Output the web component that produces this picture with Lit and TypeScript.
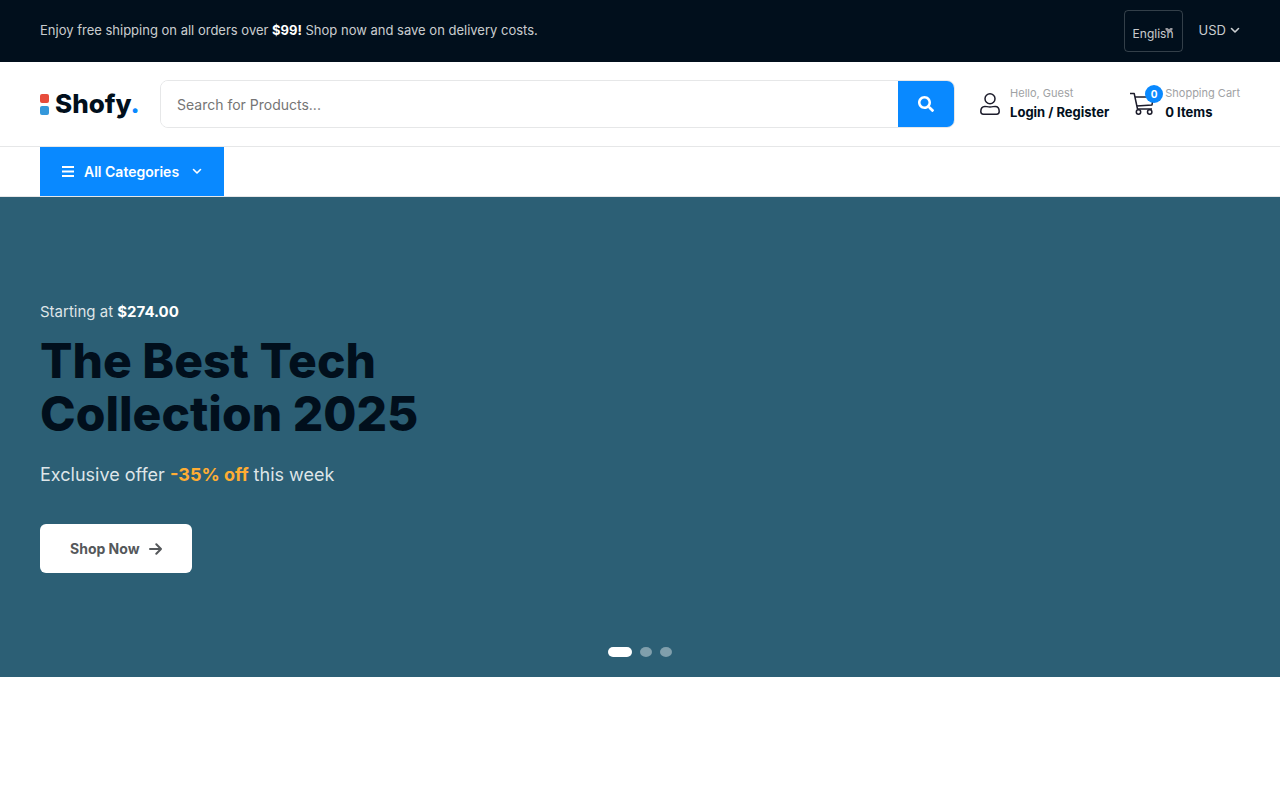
import { LitElement, html, css, svg } from "lit";
import { customElement, state } from "lit/decorators.js";

const chevron = svg`<path d="M1.500 1.500 5 5 8.500 1.500" fill="none" stroke="currentColor" stroke-width="1.600" stroke-linecap="round" stroke-linejoin="round"></path>`;

@customElement("app-root")
export class AppRoot extends LitElement {
  @state() private slide = 0;

  static styles = css`
    :host {
      display: block;
      font-family: Inter, "Liberation Sans", sans-serif;
      font-size: 14px;
      color: #010f1c;
      background: #fff;
    }
    * { box-sizing: border-box; }
    svg { display: block; flex: none; }
    a { color: inherit; text-decoration: none; }
    button, input, select { font: inherit; margin: 0; }
    button { cursor: pointer; border: 0; padding: 0; background: none; color: inherit; }
    .wrap { padding: 0 40px; }
    .topbar {
      display: flex;
      align-items: center;
      justify-content: space-between;
      background: #010f1c;
      color: rgba(255, 255, 255, 0.8);
      font-size: 13px;
      line-height: 20px;
      padding-top: 10px;
      padding-bottom: 10px;
    }
    .topbar p { margin: 0; padding-bottom: 2px; }
    .topbar strong { color: #fff; font-weight: 700; }
    .prefs { display: flex; align-items: center; gap: 16px; }
    .lang { display: grid; align-items: center; }
    .lang select, .lang svg { grid-area: 1 / 1; }
    .lang select {
      appearance: none;
      width: 59px;
      height: 42px;
      padding: 6px 0 0 8px;
      border: 1px solid rgba(255, 255, 255, 0.2);
      border-radius: 4px;
      background: transparent;
      color: inherit;
      font-size: 12px;
    }
    .lang svg { justify-self: end; margin-right: 10px; pointer-events: none; color: #9a9a9f; }
    .currency { display: flex; align-items: center; gap: 4px; padding-bottom: 2px; }
    .header { display: flex; align-items: center; min-height: 84px; }
    .logo { display: flex; align-items: center; gap: 6px; width: 120px; font-size: 26px; line-height: 34px; font-weight: 800; }
    .marks { display: grid; gap: 3px; }
    .marks i { width: 9px; height: 9px; border-radius: 2px; background: #e74c3c; }
    .marks i + i { background: #3498db; }
    .logo b { color: #0989ff; font-weight: 800; }
    .search {
      display: flex;
      flex: 1;
      height: 48px;
      border: 1px solid #e6e7e8;
      border-radius: 8px;
      overflow: hidden;
    }
    .search input { flex: 1; min-width: 0; border: 0; outline: 0; padding: 0 16px; font-size: 14px; color: inherit; background: #fff; }
    .search input::placeholder { color: #757575; opacity: 1; }
    .search button { display: grid; place-items: center; width: 56px; background: #0989ff; color: #fff; }
    .actions { display: flex; gap: 21px; margin-left: 25px; }
    .action { display: flex; align-items: center; gap: 10px; font-size: 13px; line-height: 20px; font-weight: 700; }
    .label { padding-bottom: 2px; }
    .action small { display: block; font-size: 11px; line-height: 18px; font-weight: 400; color: #a0a2a4; }
    .cart { position: relative; }
    .badge {
      position: absolute;
      top: -7px;
      right: -8px;
      width: 18px;
      height: 18px;
      border-radius: 50%;
      background: #0989ff;
      color: #fff;
      font-size: 10px;
      line-height: 18px;
      text-align: center;
    }
    .nav { border-top: 1px solid #e6e7e8; border-bottom: 1px solid #e6e7e8; }
    .categories {
      display: flex;
      align-items: center;
      width: 184px;
      height: 49px;
      padding: 0 22px;
      background: #0989ff;
      color: #fff;
      font-weight: 600;
    }
    .categories span { margin: 0 auto 0 10px; }
    .hero { display: flex; flex-direction: column; background: #2c5f75; min-height: 480px; padding-top: 102px; padding-bottom: 20px; }
    .hero p { margin: 0; color: rgba(255, 255, 255, 0.85); }
    .hero .from { font-size: 15px; line-height: 26px; }
    .from strong { color: #fff; font-weight: 700; }
    h1 { margin: 9px 0 20px; max-width: 500px; font-size: 48px; line-height: 53px; font-weight: 800; }
    .hero .offer { font-size: 18px; line-height: 30px; }
    .offer strong { color: #ffad33; font-weight: 700; }
    .shop {
      display: flex;
      align-items: center;
      align-self: flex-start;
      gap: 9px;
      height: 49px;
      margin-top: 34px;
      padding: 0 30px;
      border-radius: 6px;
      background: #fff;
      color: #55585b;
      font-weight: 700;
    }
    .dots { display: flex; justify-content: center; gap: 8px; margin-top: auto; }
    .dots button { width: 12px; height: 10px; border-radius: 50%; background: rgba(255, 255, 255, 0.4); }
    .dots button.on { width: 24px; border-radius: 5px; background: #fff; }
  `;

  render() {
    return html`
      <div class="topbar wrap">
        <p>Enjoy free shipping on all orders over <strong>$99!</strong> Shop now and save on delivery costs.</p>
        <div class="prefs">
          <div class="lang">
            <select aria-label="Language"><option>English</option></select>
            <svg width="8" height="6" viewBox="0 0 8 6"><path d="M.5 0h2L4 1.200 5.500 0h2v1.800L4 5.500.5 1.800z" fill="currentColor"></path></svg>
          </div>
          <button class="currency">USD <svg width="10" height="7" viewBox="0 0 10 7">${chevron}</svg></button>
        </div>
      </div>
      <header class="header wrap">
        <a class="logo" href="#">
          <span class="marks"><i></i><i></i></span><span>Shofy<b>.</b></span>
        </a>
        <form class="search" role="search" @submit=${(e: Event) => e.preventDefault()}>
          <input type="text" aria-label="Search for products" placeholder="Search for Products..." />
          <button aria-label="Search">
            <svg width="16" height="16" viewBox="0 0 512 512" fill="currentColor"><path d="M505 442.700 405.300 343c-4.500-4.500-10.600-7-17-7H372c27.600-35.300 44-79.700 44-128C416 93.100 322.900 0 208 0S0 93.100 0 208s93.100 208 208 208c48.300 0 92.700-16.400 128-44v16.300c0 6.400 2.500 12.500 7 17l99.700 99.700c9.400 9.400 24.600 9.400 33.900 0l28.300-28.300c9.400-9.400 9.400-24.600.1-34zM208 336c-70.700 0-128-57.200-128-128 0-70.700 57.200-128 128-128 70.700 0 128 57.200 128 128 0 70.700-57.200 128-128 128z"></path></svg>
          </button>
        </form>
        <div class="actions">
          <a class="action" href="#">
            <svg width="20" height="22" viewBox="0 0 20 22" fill="none" stroke="#1c1c2b" stroke-width="1.500"><circle cx="10" cy="5.800" r="5"></circle><path d="M.8 18.600c0-3.500 1.500-5.200 4-5.200 1.800 0 2.700.5 5.200.5s3.400-.5 5.200-.5c2.500 0 4 1.700 4 5.200 0 1.700-.9 2.600-2.600 2.600H3.400C1.700 21.200.8 20.300.8 18.600z"></path></svg>
            <span class="label"><small>Hello, Guest</small>Login / Register</span>
          </a>
          <a class="action" href="#">
            <span class="cart">
              <svg width="25" height="24" viewBox="0 0 25 24" fill="none" stroke="#1c1c2b" stroke-width="1.500" stroke-linejoin="round"><path d="M0 1.500h4.200l3.300 15.500h14.500M5 5h18.200L22 13 6.700 14"></path><circle cx="8.500" cy="20" r="2.200"></circle><circle cx="19.700" cy="20" r="2.200"></circle></svg>
              <span class="badge">0</span>
            </span>
            <span class="label"><small>Shopping Cart</small>0 Items</span>
          </a>
        </div>
      </header>
      <nav class="nav wrap">
        <button class="categories">
          <svg width="12" height="13" viewBox="0 0 12 13" fill="currentColor"><path d="M0 1h12v2H0zM0 5.500h12v2H0zM0 10h12v2H0z"></path></svg>
          <span>All Categories</span>
          <svg width="10" height="7" viewBox="0 0 10 7">${chevron}</svg>
        </button>
      </nav>
      <section class="hero wrap">
        <p class="from">Starting at <strong>$274.00</strong></p>
        <h1>The Best Tech<br />Collection 2025</h1>
        <p class="offer">Exclusive offer <strong>-35% off</strong> this week</p>
        <a class="shop" href="#">Shop Now
          <svg width="13" height="12" viewBox="0 0 13 12" fill="none" stroke="currentColor" stroke-width="2" stroke-linecap="round" stroke-linejoin="round"><path d="M1 6h11M7.300 1.200 12 6l-4.700 4.800"></path></svg>
        </a>
        <div class="dots">
          ${[0, 1, 2].map((i) => html`<button class=${i === this.slide ? "on" : ""} aria-label="Slide ${i + 1}" @click=${() => (this.slide = i)}></button>`)}
        </div>
      </section>
    `;
  }
}
